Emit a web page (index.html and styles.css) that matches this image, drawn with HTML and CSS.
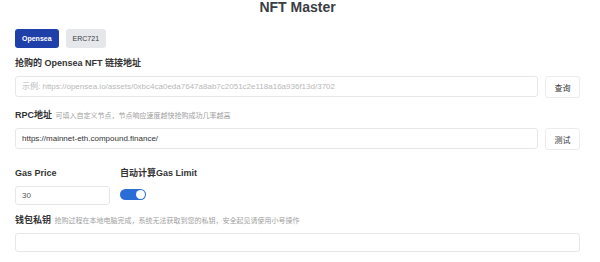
FILE: index.html
```html
<!DOCTYPE html>
<html lang="zh-CN">
<head>
    <meta charset="UTF-8">
    <meta name="viewport" content="width=device-width, initial-scale=1.0">
    <title>NFT Master</title>
    <link rel="stylesheet" href="styles.css">
</head>
<body>
    <div class="page">
        <h1 class="title">NFT Master</h1>

        <div class="tabs">
            <button class="tab active">Opensea</button>
            <button class="tab">ERC721</button>
        </div>

        <div class="field field-url">
            <div class="label">抢购的 Opensea NFT 链接地址</div>
            <div class="row">
                <input class="input" type="text" placeholder="示例: https://opensea.io/assets/0xbc4ca0eda7647a8ab7c2051c2e118a16a936f13d/3702">
                <button class="btn">查询</button>
            </div>
        </div>

        <div class="field field-rpc">
            <div class="label">RPC地址 <span class="hint">可填入自定义节点，节点响应速度越快抢购成功几率越高</span></div>
            <div class="row">
                <input class="input" type="text" value="https://mainnet-eth.compound.finance/">
                <button class="btn">测试</button>
            </div>
        </div>

        <div class="field field-gas">
            <div class="gas-col">
                <div class="label">Gas Price</div>
                <input class="input input-sm" type="text" value="30">
            </div>
            <div class="gas-col">
                <div class="label">自动计算Gas Limit</div>
                <div class="switch-wrap">
                    <span class="switch on"><span class="knob"></span></span>
                </div>
            </div>
        </div>

        <div class="field field-key">
            <div class="label">钱包私钥 <span class="hint">抢购过程在本地电脑完成，系统无法获取到您的私钥，安全起见请使用小号操作</span></div>
            <input class="input input-sm input-full" type="text">
        </div>
    </div>
</body>
</html>
```

FILE: styles.css
```css
/* Base */
* {
    margin: 0;
    padding: 0;
    box-sizing: border-box;
}

body {
    background: #fff;
    font-family: "Liberation Sans", Arial, "Noto Sans CJK SC", sans-serif;
    font-size: 9px;
    color: #333;
}

.page {
    width: 565px;
    margin-left: 15px;
}

/* Title */
.title {
    font-size: 14px;
    line-height: 14px;
    font-weight: bold;
    text-align: center;
    color: #3a3d44;
}

/* Tabs */
.tabs {
    display: flex;
    gap: 7px;
    margin-top: 15px;
}

.tab {
    height: 19px;
    padding: 0 7px;
    border: none;
    border-radius: 3px;
    background: #e6e7ea;
    color: #3a3d44;
    font-family: inherit;
    font-size: 7px;
}

.tab.active {
    background: #1f40a8;
    color: #fff;
    font-weight: bold;
}

/* Fields */
.label {
    height: 12px;
    line-height: 12px;
    font-size: 9px;
    font-weight: bold;
    color: #333;
    margin-bottom: 7px;
    white-space: nowrap;
}

.hint {
    font-size: 7px;
    font-weight: normal;
    color: #a0a0a0;
    margin-left: 1px;
}

.field-url { margin-top: 9px; }
.field-rpc { margin-top: 11px; }
.field-gas { margin-top: 17px; }
.field-key { margin-top: 9px; }

.row {
    display: flex;
    gap: 7px;
}

.input {
    display: block;
    flex: 1;
    height: 21px;
    padding: 0 6px;
    border: 1px solid #e6e7ea;
    border-radius: 3px;
    font-family: inherit;
    font-size: 8px;
    color: #333;
    outline: none;
}

.input::placeholder {
    color: #b8b8b8;
}

.input-sm {
    height: 19px;
    color: #555;
}

.input-full {
    width: 100%;
}

.btn {
    width: 35px;
    height: 22px;
    border: 1px solid #ececee;
    border-radius: 3px;
    background: #fff;
    font-family: inherit;
    font-size: 8px;
    color: #333;
}

/* Gas row */
.field-gas {
    display: flex;
    gap: 10px;
}

.gas-col .input-sm {
    width: 95px;
}

.switch-wrap {
    height: 19px;
    padding-top: 3px;
}

.switch {
    display: block;
    width: 26px;
    height: 11px;
    border-radius: 6px;
    background: #ccc;
    position: relative;
}

.switch.on {
    background: #2b6dd6;
}

.knob {
    position: absolute;
    top: 1px;
    left: 1px;
    width: 9px;
    height: 9px;
    border-radius: 50%;
    background: #fff;
}

.switch.on .knob {
    left: 16px;
}
```
